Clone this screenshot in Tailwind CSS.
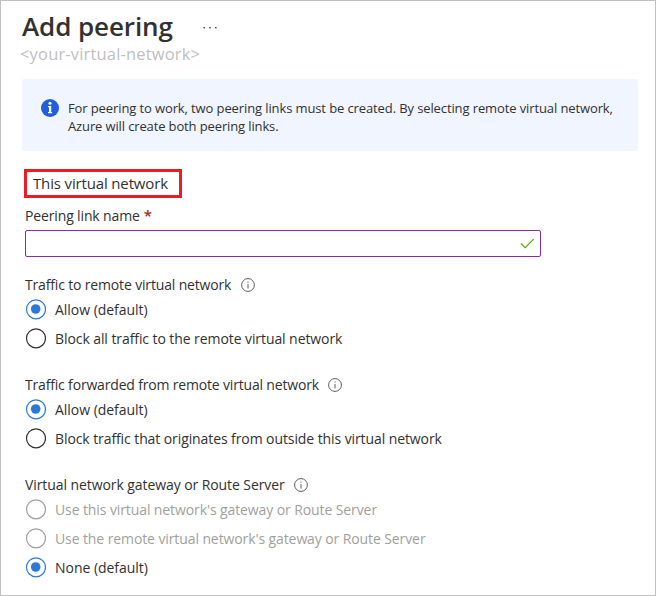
<!DOCTYPE html>
<html lang="en">
<head>
<meta charset="utf-8">
<title>Add peering</title>
<script src="https://cdn.jsdelivr.net/npm/@tailwindcss/browser@4"></script>
</head>
<body class="bg-white">
<main class="h-[596px] w-[656px] overflow-hidden border border-[#c0c0c0] pl-[21px] pr-[17px] font-['Open_Sans','Noto_Sans',sans-serif] text-[14px] whitespace-nowrap text-[#323130]">
  <header class="h-[78px] pt-[7px]">
    <div class="flex h-[37px] items-start">
      <h1 class="w-[181px] text-[26px] leading-[36px] font-semibold tracking-[-0.1px]">Add peering</h1>
      <svg class="mt-[18px] h-[4px] w-[14px]" viewBox="0 0 14 4" fill="#323130"><rect x="0.5" y="1" width="1.4" height="1.4"/><rect x="6.3" y="1" width="1.4" height="1.4"/><rect x="12.1" y="1" width="1.4" height="1.4"/></svg>
    </div>
    <p class="-ml-[2px] text-[16.5px] leading-[18px] tracking-[0.17px] text-[#bfbfbf]"><span>&lt;your-virtual-network&gt;</span></p>
  </header>
  <section class="flex h-[72px] rounded-[2px] bg-[#f0f5ff] pt-[20px] pl-[19px]">
    <svg class="mr-[9px] h-[18px] w-[18px]" viewBox="0 0 18 18"><circle cx="9" cy="9" r="9" fill="#1f5fdc"/><circle cx="9" cy="4.3" r="1.5" fill="#fff"/><path d="M7 7h3.2v6h1v1.3H7V13h1V8.2H7z" fill="#fff"/></svg>
    <div class="text-[13px] leading-[18px]">
      <p><span class="tracking-[-0.11px]">For peering to work, two peering links must be created. By selecting remote virtual network,</span></p>
      <p><span class="tracking-[-0.13px]">Azure will create both peering links.</span></p>
    </div>
  </section>
  <h2 class="mt-[18px] ml-[2px] flex h-[29px] w-[158px] items-center border-[3px] border-[#ed1c24] pl-[6px]"><span class="text-[15px] tracking-[-0.15px]">This virtual network</span></h2>
  <div class="ml-[3px]">
    <label for="link" class="mt-[7px] flex h-[20px] items-center"><span class="tracking-[-0.14px]">Peering link name</span><span class="ml-[4px] text-[15px] font-semibold text-[#a4262c]">*</span></label>
    <div class="mt-[5px] flex h-[27px] w-[516px] items-center rounded-[2px] border border-[#8a2da5] pr-[5px]">
      <input id="link" type="text" class="h-full min-w-0 flex-1 outline-none">
      <svg class="h-[12px] w-[15px]" viewBox="0 0 15 12" fill="none" stroke="#57a300" stroke-width="1.2"><path d="M1 5.5 5.2 9.7 13.7 1.2"/></svg>
    </div>
    <section class="mt-[17px] h-[100px]">
      <h3 class="flex h-[21px] items-start leading-[22px]"><span class="tracking-[-0.16px]">Traffic to remote virtual network</span>
        <svg class="mt-[3.5px] ml-[10px] h-[14px] w-[14px]" viewBox="0 0 14 14" fill="none" stroke="#605e5c"><circle cx="7" cy="7" r="6.4"/><path d="M7 6v4.5M7 3.5v1.2"/></svg></h3>
      <label class="flex h-[29px] items-center"><svg class="mr-[9px] h-[21px] w-[21px]" viewBox="0 0 21 21"><circle cx="11" cy="10.3" r="9.5" fill="#fff" stroke="#2b7bd6" stroke-width="1.2"/><circle cx="10.7" cy="10" r="4.8" fill="#2b7bd6"/></svg><span class="tracking-[-0.03px]">Allow (default)</span></label>
      <label class="flex h-[29px] items-center"><svg class="mr-[9px] h-[21px] w-[21px]" viewBox="0 0 21 21"><circle cx="11" cy="10.3" r="9.5" fill="#fff" stroke="#323130" stroke-width="1.2"/></svg><span class="tracking-[-0.08px]">Block all traffic to the remote virtual network</span></label>
    </section>
    <section class="h-[100px]">
      <h3 class="flex h-[21px] items-start leading-[22px]"><span class="tracking-[-0.175px]">Traffic forwarded from remote virtual network</span>
        <svg class="mt-[3.5px] ml-[9px] h-[14px] w-[14px]" viewBox="0 0 14 14" fill="none" stroke="#605e5c"><circle cx="7" cy="7" r="6.4"/><path d="M7 6v4.5M7 3.5v1.2"/></svg></h3>
      <label class="flex h-[29px] items-center"><svg class="mr-[9px] h-[21px] w-[21px]" viewBox="0 0 21 21"><circle cx="11" cy="10.3" r="9.5" fill="#fff" stroke="#2b7bd6" stroke-width="1.2"/><circle cx="10.7" cy="10" r="4.8" fill="#2b7bd6"/></svg><span class="tracking-[-0.03px]">Allow (default)</span></label>
      <label class="flex h-[29px] items-center"><svg class="mr-[9px] h-[21px] w-[21px]" viewBox="0 0 21 21"><circle cx="11" cy="10.3" r="9.5" fill="#fff" stroke="#323130" stroke-width="1.2"/></svg><span class="tracking-[-0.09px]">Block traffic that originates from outside this virtual network</span></label>
    </section>
    <section>
      <h3 class="flex h-[21px] items-start leading-[22px]"><span class="tracking-[-0.08px]">Virtual network gateway or Route Server</span>
        <svg class="mt-[3.5px] ml-[9px] h-[14px] w-[14px]" viewBox="0 0 14 14" fill="none" stroke="#605e5c"><circle cx="7" cy="7" r="6.4"/><path d="M7 6v4.5M7 3.5v1.2"/></svg></h3>
      <label class="flex h-[29px] items-center text-[#a19f9d]"><svg class="mr-[9px] h-[21px] w-[21px]" viewBox="0 0 21 21"><circle cx="11" cy="10.3" r="9.5" fill="#fff" stroke="#a19f9d" stroke-width="1.2"/></svg><span class="tracking-[-0.1px]">Use this virtual network's gateway or Route Server</span></label>
      <label class="flex h-[29px] items-center text-[#a19f9d]"><svg class="mr-[9px] h-[21px] w-[21px]" viewBox="0 0 21 21"><circle cx="11" cy="10.3" r="9.5" fill="#fff" stroke="#a19f9d" stroke-width="1.2"/></svg><span class="tracking-[-0.1px]">Use the remote virtual network's gateway or Route Server</span></label>
      <label class="flex h-[29px] items-center"><svg class="mr-[9px] h-[21px] w-[21px]" viewBox="0 0 21 21"><circle cx="11" cy="10.3" r="9.5" fill="#fff" stroke="#2b7bd6" stroke-width="1.2"/><circle cx="10.7" cy="10" r="4.8" fill="#2b7bd6"/></svg><span class="tracking-[-0.03px]">None (default)</span></label>
    </section>
  </div>
</main>
</body>
</html>
